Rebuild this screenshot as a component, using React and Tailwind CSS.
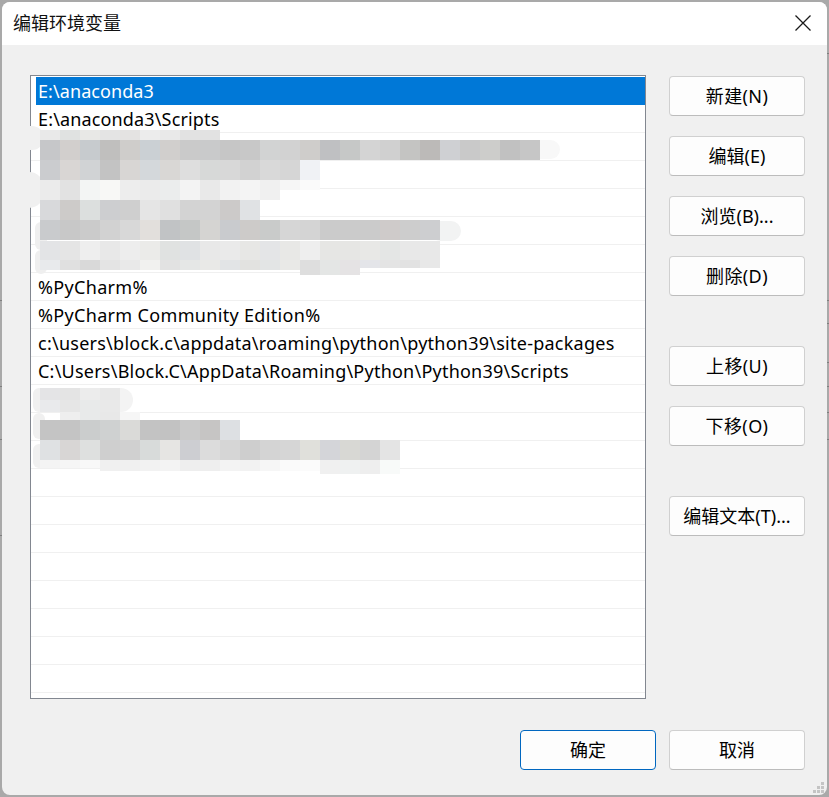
const ROWS = [
  { x: 40, y: 130, h: 10, c: ["e9e9e9","e0e2e1","e8e8e6","e4e4e4","e4e3e2","ececec","e9e9e9","e2e2e2","e2e2e2"] },
  { x: 40, y: 140, h: 20, c: ["c6c7c9","d2cfcd","c7cbce","c0bfbe","cfcdcb","cbd0d4","d1cfcd","cacaca","c9cacb","c6c6c6","c8c8c8","d2d3d3","d2d2d2","cfcdcb","bfc0c2","c6c8c7","d4d4d4","d0d0d0","c4c4c2","bcbab8","cfd0d3","c9c9c9","cdcdcb","c1c1c1","c6c6c6"] },
  { x: 40, y: 160, h: 20, c: ["cbcccf","d9d6d4","d1d3d5","c3c3c3","d8d6d4","d4d8db","d9d7d5","dedede","d7d9d8","d8d8d8","d2d2d2","d9d9d9","d6d6d6","f0f2f5"] },
  { x: 40, y: 180, h: 20, c: ["ebebeb","e2e2e2","f3f5f4","f8f8f6","ededed","ebebeb","ebeded","f3f3f3","e9e9e9","f2f2f2","f4f4f4","f0f0f0"] },
  { x: 280, y: 180, h: 10, c: ["f6f6f6","fafafa"] },
  { x: 40, y: 200, h: 20, c: ["d8d9db","cdcbc9","dcdfde","cdced0","cfcfcf","e5e5e5","e0e0e0","d3d3d3","d3d3d3","cccac9","e0e2e4"] },
  { x: 40, y: 220, h: 20, c: ["c9cbcd","c8c8c8","cbcbcb","d2d2d2","d8d8d8","e2dfdc","c1c3c5","c5c7c6","d5d4d2","c9cbce","cdcbc9","c9cbca","d6d6d6","d4d4d4","cbcbcb","cbcbcb","cbcbcb","cfcbca","cdcdcd","cdced0"] },
  { x: 40, y: 241, h: 19, c: ["e3e4e6","e5e5e5","eeeeee","e8e8e8","ededed","ebebe9","e0e2e1","e0e2e4","e8e8e8","eaeaea","e7e7e5","e4e5e7","e8e8e6","eeeeee","e6e6e4","e6e6e4","e8e8e6","e4e6e5","e8e8e8","e8e8e8"] },
  { x: 40, y: 260, h: 10, c: ["e8eaec","e0e0e0","d9d9d9","e4e4e4","e9e9e9","f1f1ef","e2e2e2","e5e7e6","e9e9e7","e2e4e6","e2e2e0","e3e5e5","e9e9e7"] },
  { x: 300, y: 260, h: 15, c: ["dedede","e4e6e5","e5e3e4"] },
  { x: 360, y: 260, h: 8, c: ["e4e5e9","e4e4e4","e2e2e2","e8e8e8"] },
  { x: 40, y: 388, h: 12, c: ["e4e4e6","e4e4e4","ececec","e8e8e8"] },
  { x: 40, y: 400, h: 12, c: ["e9eaec","e6e6e6","e8eaea","e9e9e9"] },
  { x: 60, y: 412, h: 8, c: ["eeeeee","e8eaea","e8e8e8","f6f6f6"] },
  { x: 40, y: 420, h: 20, c: ["c4c4c4","c4c4c4","cbcdcd","cfd1d1","dadad8","c3c3c3","c2c2c2","cacaca","c6c5c4","dde0e3"] },
  { x: 40, y: 440, h: 20, c: ["dfe1e3","d8d6d5","dee0df","cfcfcf","d0d0d0","d8dbda","e6e5e3","cdced2","dcdcdc","d6d6d6","cecece","d4d4d4","d6d6d6","e0e0db","d4d5d9","d8d8d4","d4d4d4","e4e4e4"] },
  { x: 40, y: 460, h: 8, c: ["f4f4f4","f6f6f6","f8f8f8"] },
  { x: 100, y: 460, h: 11, c: ["f0f0f0","f0f0f0","f2f2f2","f3f3f3","eeeeee","eeeeee","f3f3f3","f2f2f2","f6f6f6","fafafa","fbfbfb"] },
  { x: 320, y: 460, h: 14, c: ["f0f0f0","eff1f1","eeeeee","f8faf9"] },
];

const SMEARS = [
  { x: 14, y: 126, w: 30, h: 24, c: "#f0f0f0" },
  { x: 14, y: 172, w: 30, h: 36, c: "#f0f0f0" },
  { x: 35, y: 222, w: 12, h: 28, c: "#efefef" },
  { x: 35, y: 250, w: 12, h: 24, c: "#efefef" },
  { x: 530, y: 140, w: 30, h: 19, c: "#f8f8f8" },
  { x: 430, y: 221, w: 31, h: 20, c: "#f2f3f3" },
  { x: 33, y: 388, w: 12, h: 24, c: "#f0f0f0" },
  { x: 100, y: 388, w: 33, h: 24, c: "#f3f3f3" },
  { x: 33, y: 413, w: 12, h: 26, c: "#f0f0f0" },
  { x: 33, y: 444, w: 12, h: 24, c: "#f0f0f0" },
];

const TEXTS = {
  0: ["E:\\anaconda3", "tracking-[0.08px]"],
  1: ["E:\\anaconda3\\Scripts", "tracking-[0.15px]"],
  7: ["%PyCharm%", "tracking-[0.33px]"],
  8: ["%PyCharm Community Edition%", "tracking-[0.33px]"],
  9: ["c:\\users\\block.c\\appdata\\roaming\\python\\python39\\site-packages", "tracking-[0.25px]"],
  10: ["C:\\Users\\Block.C\\AppData\\Roaming\\Python\\Python39\\Scripts", "tracking-[0.23px]"],
};

const EDGE_LINES = [
  ["left-0", 300], ["left-0", 386], ["left-0", 439], ["left-0", 535],
  ["right-0", 53], ["right-0", 300], ["right-0", 323], ["right-0", 362], ["right-0", 386], ["right-0", 412], ["right-0", 439],
];

const FONT = "font-['Noto_Sans','Noto_Sans_CJK_SC',sans-serif]";

function Btn({ children, primary, className = "" }) {
  return (
    <div
      className={`flex h-10 w-[136px] shrink-0 items-center justify-center rounded-[4px] border bg-[#fdfdfd] text-[18px] leading-none text-black ${
        primary ? "border-[#0067c0]" : "border-[#d0d0d0] border-b-[#bcbcbc]"
      } ${className}`}
    >
      {children}
    </div>
  );
}

function Row({ i }) {
  const selected = i === 0;
  const [text, track] = TEXTS[i] || ["", ""];
  return (
    <div className={`h-7 shrink-0 ${selected ? "pl-[5px]" : "border-b border-[#f0f0f0]"}`}>
      <div
        className={`flex h-full items-center text-[18px] leading-none whitespace-nowrap ${track} ${
          selected ? "bg-[#0078d7] pl-[2px] text-white" : "pl-[7px] text-black"
        }`}
      >
        {text}
      </div>
    </div>
  );
}

export default function App() {
  return (
    <div className={`relative h-[797px] w-[829px] overflow-hidden bg-[#a9a9a9] p-[2px] ${FONT}`}>
      <div className="flex h-full flex-col overflow-hidden rounded-lg bg-[#f0f0f0]">
        <div className="flex h-[43px] shrink-0 items-center justify-between bg-white pr-4 pb-[2px] pl-[11px]">
          <span className="text-[18px] leading-none text-[#111]">编辑环境变量</span>
          <svg width="16" height="16" viewBox="0 0 16 16" aria-hidden="true">
            <path d="M0.5 0.5 L15.5 15.5 M15.5 0.5 L0.5 15.5" stroke="#1a1a1a" strokeWidth="1.3" fill="none" />
          </svg>
        </div>

        <div className="flex flex-1 flex-col pt-[30px] pl-7">
          <div className="flex items-start gap-[23px]">
            <div className="flex h-[624px] w-[616px] shrink-0 flex-col border border-[#828790] bg-white pt-px">
              {Array.from({ length: 22 }, (_, i) => (
                <Row key={i} i={i} />
              ))}
            </div>
            <div className="mt-px flex flex-col">
              <Btn className="tracking-[0.4px]">新建(N)</Btn>
              <Btn className="mt-5">编辑(E)</Btn>
              <Btn className="mt-5">浏览(B)...</Btn>
              <Btn className="mt-5 tracking-[0.4px]">删除(D)</Btn>
              <Btn className="mt-[50px] tracking-[0.4px]">上移(U)</Btn>
              <Btn className="mt-5 tracking-[0.4px]">下移(O)</Btn>
              <Btn className="mt-[50px]">编辑文本(T)...</Btn>
            </div>
          </div>
          <div className="mt-[31px] flex justify-end gap-[13px] pr-[22px]">
            <Btn primary>确定</Btn>
            <Btn>取消</Btn>
          </div>
        </div>
      </div>

      {SMEARS.map((s, i) => (
        <div
          key={i}
          className="absolute rounded-full"
          style={{ left: s.x, top: s.y, width: s.w, height: s.h, backgroundColor: s.c }}
        />
      ))}
      {ROWS.map((r, i) => (
        <div key={i} className="absolute flex" style={{ left: r.x, top: r.y, height: r.h }}>
          {r.c.map((c, j) => (
            <div key={j} className="h-full w-5" style={{ backgroundColor: "#" + c }} />
          ))}
        </div>
      ))}

      {EDGE_LINES.map(([side, y], i) => (
        <div key={i} className={`absolute h-px w-[2px] bg-[#7f7f7f] ${side}`} style={{ top: y }} />
      ))}

      <svg
        className="absolute top-[782px] left-[813px]"
        width="12"
        height="12"
        viewBox="0 0 12 12"
        aria-hidden="true"
      >
        <g fill="#c4c4c4">
          <rect x="8" y="0" width="3" height="3" />
          <rect x="4" y="4" width="3" height="3" />
          <rect x="8" y="4" width="3" height="3" />
          <rect x="0" y="8" width="3" height="3" />
          <rect x="4" y="8" width="3" height="3" />
          <rect x="8" y="8" width="3" height="3" />
        </g>
      </svg>
    </div>
  );
}
